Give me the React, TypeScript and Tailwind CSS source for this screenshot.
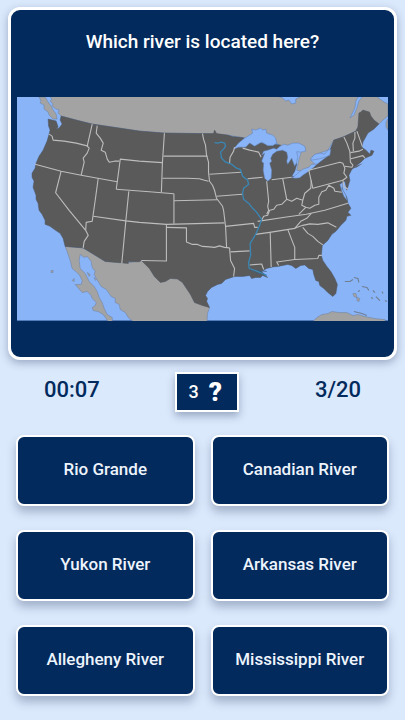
const answers = [
  "Rio Grande",
  "Canadian River",
  "Yukon River",
  "Arkansas River",
  "Allegheny River",
  "Mississippi River",
];

const canada =
  "M50 96L53 99L51 101L54 104L53 106L57 109L60 110L59 113L62 116L77 120L93 124L120 128L140 131L165 133L203 133.5L228 135L243 137.5L262 142L277 143L281 146L297 145L302 150L299 160L297 170L303 171L315 164L311 160L314 155L328 150L334 140L343 137L356 131L358 127L372 119L379 124L383 120L388 116V104L384 102L380 99L376 96Z";

const vancouverIsland = "M40 97L42 101L41 103L45 105L45 109L49 112L50 115L54 119L58 119L57 114L54 110L52 106L49 102L46 97Z";

const mexico =
  "M66 246L84 247.5L106 261L129 262L142 260L160 262L200 285L210 307L208 313L207.5 321H134L129 317L126 312L121 309L120 304L116 302L116 298L112 296L107 289L102 286L97 278L95 274L96 271L93 267L92 261L88 256L85 257L81 254L80 260L81 268L86 273L90 281L95 286L98 291L100 297L103 302L105 308L108 314L113 317L113 321H109L104 314L99 311L94 310L93 307L96 305L97 302L93 298L92 295L88 291L83 292L76 284L82 284L83 280L80 274L73 268L71 260L68 251Z";

const usa =
  "M62 116L61 120L63 124L60 128L57 129L59 127L57 121L49 119L49.5 126L51 130L50 134L48 141L44 150L40 156L37 163L36 168L33 173L33 177L35 181L34 187L37 195L37 199L39 203L40 210L43 214L46 220L46 224L51 226L55 229L61 233L64 238L66 246L84 247.5L106 261L129 263V261.3H140L142 260L150 268L155 276L161 282L166 281L171 278L178 278.5L183 282L187 288L191 294L195 302L203 305L210 307L207 301L208 298L206 295L208 291L212 287L218 284L222 283L226 279L229 278L235 276L243 276L250 275L252 278L256 277L261 277L263 275L268 277L264 273L262 271L267 268L273 266.5L278 266L288 264L292 265L296 268L301 265L305 264.5L309 268L313 269L314 274L316 280L319 281L320 285L324 288L328 292L333 296L336 293L337.5 284L335 278L331 271L327 266L323 260L321.5 255L322.5 245L328 240L332 234L336 231L341 225L346 220L347 216L351 215L348 212L351 208L348 203L347 197L343 190L341 183L345 181L347 190L350 180L349 175L351.5 170L353 168L361 162L365 158L372 155L374 151L371 150L370 154L366 150L362 147L363 142L368 133L374 129L379 124L374 120L371 116L369.5 112L366 111L363 110L361 112L359 113L358 127L356 131L343 137L334 140L330 150L328 156L311 169L300 177L292 176L295 171L297 164L293 158L290 148L284 150L277 149L281 145L275 144L260 143L243 137.5L233 136.5L228 135L217 133.5L215 130L214 133.5L203 133.5L165 133L140 131L120 128L93 124L77 120Z";

const lakes = [
  "M235 147.5L239 143L245 138L250 135L253 133L252 129L256 130L261 128L263 130L266 129L267 133L273 135L276 138L277 143L273 145.5L268 145.5L262 142L255 146L250 143L246 147L239 147L234 149Z",
  "M280 146.5L284 144L288 145L293 143L299 143L305 146L306 151L301 152L297 151.5L298 157L296.5 163L295 166L293 161L292 158L288 164L287 161L288 157L287 152L283 150L277 151L273 154L271 158L272 161L270 163L272 170L271.5 178L268 181L265 178L263.5 170L264 163L262 161L265 153L262 155L264 151L268 150L274 148L277 149Z",
  "M292 177.5L296 175L299 172L303 169L309 167L312 164L317 164L314 167L309 171L303 175L300 177.5L296 178Z",
  "M311 158.5L315 154L320 153L325 154L328 150L331 149L330 155L325 157L320 158.5L315 159.5L311 160Z",
  "M350 118L353 112L355 108L356 101L358 97L363 96L359 101L357 108L354 115Z",
  "M277 96L283 98L286 101L289 100L292 104L296 103L296 99L302 96Z",
  "M340 184L343 183L342 188L346 195L347 200L344 196L342 191Z",
];

const stateLines = [
  // west
  "M50 134L53 136L54 140L65 141L77 143L89 146",
  "M93 124L88 146L90 148L88 153L84 158L85 162L82 175",
  "M36 164L62 171L82 175L118 181.5",
  "M98 125.5L97 133L101 138L104 143L102 150L106 152L108 159L110 162L115 161L120 161",
  "M117 189L121 159L140 161L163 162.5",
  "M117 189L150 191.5L174.5 193.5",
  "M165 133L163 163L162 192",
  "M99 178L96 200L93 221L87 222L86.5 230L89 235L85 241L84 247.5",
  "M62 171L56.5 192.5L70 210L86.5 230",
  "M129.5 191L126.5 221L122.5 263",
  "M94 216L126.5 220.5L140 222L167 224L225 222.5",
  // plains
  "M167 224V260.5L142 260",
  "M167 227L187 227.5V241.5L193 244L198 244L203 246L210 246.5L215 247L220 245.5L225 247L230 247.5",
  "M174.5 193.5V223.5",
  "M174.5 200.5L218 199.5",
  "M164 156H208",
  "M163 178L188 178L200 178.5L205 180L209 181",
  "M203 133.5L204 139L206 145L207 155L209 162V172L210 181L213 185L215 190L217 198L220 202L223 206L224 210L226 226L227 247",
  "M210 174L241.5 172",
  "M217 196L242.5 194",
  "M226 226L254 223L255 227L258 227",
  "M230 247.5L231 260L235 268L234 276",
  "M231 251.5L250 250.5",
  // midwest
  "M235 147L234 151L230.5 157L230 163",
  "M243 148L250 150L259 152L261.5 157",
  "M248 178.5L263 177",
  "M267 181L269 201L268 206L269 210L267 214",
  "M272 179.5L292 177",
  "M283 178.5L287 199",
  "M262 220L264 216L268 215L270 210L274 209L277 205L282 204L287 199L292 201L297 198L303 200L305 193L311 188L311.5 180",
  "M309 170L313 188L343 180",
  "M303 200L302 205L306 207L310 208L315 205L319 204L319 197L322 191.5L326 190L329 185L334 188L335 191L342 192",
  // south
  "M258 221L285 217L306.5 214L325 210L348 203",
  "M299 214L306 207",
  "M256 234L270 232L295 228L303 225L310 223.5L318 224L328 222.5L336.5 227",
  "M295 228L301 221L307 218L311.5 213",
  "M303 227L308 233L313 236L318 241L323 244.5",
  "M270.5 232L271.5 266.5",
  "M288 229L293 242L295 247V259",
  "M279 265L277 261.5L295 259L318 258L319 255L322 255",
  "M250 264.5L262 263.5L264 269",
  // northeast
  "M309 170L340 162L343 163L345 168L344 173L347 177L343 180L344 186L348 189",
  "M344 137L347 143L350 151.5L350.5 162L353 165L352 167L345 166",
  "M355 132L355 138L353 143L353.5 151",
  "M357 131L362.5 146.5",
  "M350.5 152.5L359 151L363 149",
  "M351 158.5L363 155.5L365 158",
];

const river =
  "M215 142.5L218 143L222 142L225 143L226 146L224 149L221 152L222 158L226 162L232 164L237 168L241 169.5L243 176L248 180L249 184L244 188L243 193L244 199L250 204L253 208L257 212L262 219L260 225L256.5 233L253 239L250.5 243L251 255L249 262L249.5 268L256.5 270.5L267 275";

function RiverMap() {
  return (
    <svg viewBox="18 97 370 223" className="block w-full" role="img" aria-label="Map">
      <rect x="18" y="97" width="370" height="223" fill="#8ab4f8" />
      <g fill="#a3a3a3" stroke="#6d7f9c" strokeWidth="0.5">
        <path d={canada} />
        <path d={vancouverIsland} />
        <path d={mexico} />
        <path d="M388 119L386 122L386 127L388 130Z" />
        <path d="M313 321L317 317L322 314L328 313L332 311L340 312L347 312L353 315L358 314L365 316L375 318L385 319V321Z" />
        <path d="M353 293L356 293L357 297L354 296ZM357 297L360 298L359 301L357 300Z" />
        <path d="M88 272L91 274L90 276ZM95 277L97 279L96 280ZM52 270H54V272H52ZM73 280L75 278L75 281Z" />
      </g>
      <path d={usa} fill="#5a5a5a" stroke="#4b5563" strokeWidth="0.5" />
      <g fill="#8ab4f8" stroke="#5f7fae" strokeWidth="0.5">
        {lakes.map((d) => (
          <path key={d} d={d} />
        ))}
      </g>
      <path d="M351 169L358 165L363 163L357 167Z" fill="#5a5a5a" />
      <g fill="none" stroke="#bdbdbd" strokeWidth="1.1" strokeLinejoin="round">
        {stateLines.map((d) => (
          <path key={d} d={d} />
        ))}
      </g>
      <path d={river} fill="none" stroke="#3a86b4" strokeWidth="1.3" strokeLinejoin="round" />
      <path d="M250 269L258 273L264 274M258 270L267 271" fill="none" stroke="#3f5f7d" strokeWidth="0.8" />
      {/* Bahamas */}
      <path
        d="M345 281L350 281L353 279M354 277L358 278L359 282M362 286L367 287L369 290M358 291L360 290M373 290L375 292M371 297L373 298M376 296L380 300M382 291L383 293M385 300L387 301M354 311L362 313L367 315"
        fill="none"
        stroke="#6f7f92"
        strokeWidth="1.1"
      />
    </svg>
  );
}

export default function App() {
  return (
    <main className="min-h-screen bg-[#dbe9fc] px-2 pt-[7px] pb-6 font-[Roboto,sans-serif] text-[#022a5c]">
      <section className="rounded-xl border-3 border-white bg-[#022a5c] px-1.5 pt-5 pb-9 shadow-[0_3px_8px_rgba(30,50,90,0.35)]">
        <h1 className="pb-[43px] text-center text-[19px] leading-6 font-medium text-white">Which river is located here?</h1>
        <RiverMap />
      </section>

      <div className="flex justify-between px-9 pt-3">
        <span className="pt-1 text-[22px] leading-7 font-medium">00:07</span>
        <button
          type="button"
          aria-label="3 hints left"
          className="flex h-10 w-16 items-center justify-center gap-2.5 border-2 border-white bg-[#022a5c] pr-1 text-white shadow-[0_4px_8px_rgba(30,50,90,0.35)]"
        >
          <span className="text-lg font-medium">3</span>
          <span className="text-[26px] leading-8 font-black">?</span>
        </button>
        <span className="pt-1 text-[22px] leading-7 font-medium">3/20</span>
      </div>

      <div className="mt-[23px] grid grid-cols-2 gap-x-4 gap-y-6 px-2">
        {answers.map((answer) => (
          <button
            key={answer}
            type="button"
            className="h-[71px] rounded-lg border-2 border-white bg-[#022a5c] text-[17px] font-medium text-[#eef4fc] shadow-[0_6px_10px_rgba(30,50,90,0.3)]"
          >
            {answer}
          </button>
        ))}
      </div>
    </main>
  );
}
